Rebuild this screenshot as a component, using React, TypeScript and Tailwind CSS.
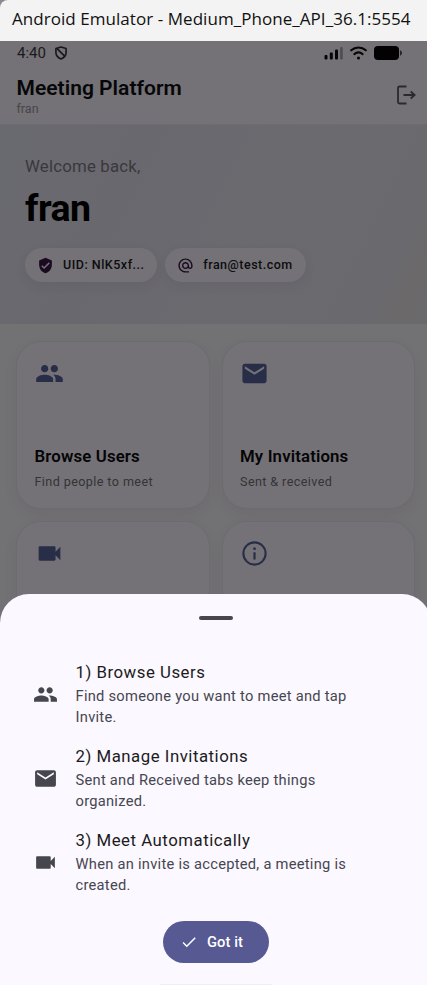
import type { ComponentType, ReactNode } from "react";
import {
  MdAlternateEmail,
  MdCheck,
  MdEmail,
  MdPeople,
  MdVerifiedUser,
  MdVideocam,
} from "react-icons/md";

type Icon = ComponentType<{ className?: string }>;

function InfoIcon({ className }: { className?: string }) {
  return (
    <svg className={className} viewBox="0 0 24 24" fill="none" stroke="currentColor" strokeWidth="1.700">
      <circle cx="12" cy="12" r="9.200" />
      <path d="M12 11v6" strokeWidth="1.800" />
      <path d="M12 7v2" strokeWidth="2" />
    </svg>
  );
}

function TitleBar() {
  return (
    <div className="h-[41px] shrink-0 bg-[#8a8a8a]">
      <div className="flex h-full items-center rounded-tl-[8px] bg-[#f3f3f3] pl-3 pb-[3px]">
        <span className="whitespace-nowrap font-['Open_Sans','Noto_Sans',sans-serif] text-[17px] leading-6 tracking-[0.05px] text-[#111]">
          Android Emulator - Medium_Phone_API_36.1:5554
        </span>
      </div>
    </div>
  );
}

function StatusBar() {
  return (
    <div className="flex h-[24px] items-center pl-[17px] pr-[29px]">
      <span className="text-[15px] leading-5 text-[#1b1a1d]">4:40</span>
      <svg className="ml-[9px] h-[14px] w-[12px]" viewBox="0 0 13 15" fill="none" stroke="#19181b" strokeWidth="1.8">
        <path d="M6.5 1 12 2.6V7c0 3.2-2.2 5.6-5.5 7C3.200 12.600 1 10.200 1 7V2.600Z" strokeLinejoin="round" />
        <path d="M2 2.500 11 11.500" />
      </svg>
      <div className="ml-auto flex items-center gap-[7px]">
        <svg className="h-[14px] w-[19px]" viewBox="0 0 19 14">
          <rect x="0.500" y="9" width="3" height="4.500" rx="1" fill="#050505" />
          <rect x="5.800" y="6.500" width="3" height="7" rx="1" fill="#050505" />
          <rect x="11" y="3.500" width="3" height="10" rx="1" fill="#050505" />
          <rect x="16.200" y="1" width="2.500" height="12.500" rx="1" fill="#4c4b4e" />
        </svg>
        <svg className="h-[14px] w-[17px]" viewBox="0 0 17 14" fill="none" stroke="#050505" strokeWidth="2.100" strokeLinecap="round">
          <path d="M1.200 4.300C5.300.6 11.700.6 15.800 4.300" />
          <path d="M4.400 8.100c2.500-2.100 5.700-2.100 8.200 0" />
          <circle cx="8.500" cy="12" r="1.500" fill="#050505" stroke="none" />
        </svg>
        <svg className="h-[14px] w-[28px]" viewBox="0 0 28 14" fill="#020202">
          <rect width="25" height="14" rx="4" />
          <path d="M26.300 4.300c1.800.6 1.800 4.800 0 5.400Z" />
        </svg>
      </div>
    </div>
  );
}

function AppBar() {
  return (
    <div className="flex h-[60px] items-center justify-between border-b border-[#6e6c71] pl-[16.500px] pr-[15.500px]">
      <div className="flex flex-col pt-[2px]">
        <span className="text-[21px] font-semibold leading-[25px] tracking-[0.030px] text-[#070709]">Meeting Platform</span>
        <span className="text-[12.500px] leading-[15px] text-[#474649]">fran</span>
      </div>
      <svg className="mt-[1px] h-[20px] w-[20px]" viewBox="0 0 20 20" fill="none" stroke="#2a292c" strokeWidth="1.800">
        <path d="M10.500 1.500H3.500C2.500 1.500 2 2 2 3v14c0 1 .5 1.500 1.500 1.500H10.500" />
        <path d="M7.500 10h11M14.700 6.500l3.900 3.500-3.900 3.500" />
      </svg>
    </div>
  );
}

function Chip({ icon: Icon, children }: { icon: Icon; children: ReactNode }) {
  return (
    <div className="flex h-[34px] items-center gap-[9px] rounded-full bg-[#747276] pl-3 pr-[12.800px] shadow-[0_4px_10px_rgba(70,65,80,0.12)]">
      <Icon className="size-[17px] text-[#1b0b20]" />
      <span className="whitespace-nowrap text-[12.500px] font-medium leading-4 tracking-[0.500px] text-[#0d0c0f]">
        {children}
      </span>
    </div>
  );
}

function Hero() {
  return (
    <div className="flex h-[199px] flex-col bg-[linear-gradient(115deg,#696a70_0%,#69686e_28%,#6b6a6f_60%,#6a696e_87%,#6b6969_94%,#6a696e_100%)] pl-[25px] pt-[30px]">
      <span className="text-[16.800px] leading-[22px] tracking-[0.200px] text-[#39383c]">Welcome back,</span>
      <span className="mt-[8px] text-[37.500px] font-bold leading-[46px] tracking-[-0.5px] text-black">fran</span>
      <div className="mt-[17px] flex gap-2">
        <Chip icon={MdVerifiedUser}>UID: NlK5xf...</Chip>
        <Chip icon={MdAlternateEmail}>fran@test.com</Chip>
      </div>
    </div>
  );
}

function ActionCard({ icon: Icon, title, text }: { icon: Icon; title?: string; text?: string }) {
  return (
    <div className="flex h-[168px] flex-col items-start rounded-[25px] border border-[#6c6b71] bg-[#747276] px-[17.500px] pb-[17.500px] pt-[17px] shadow-[0_6px_12px_rgba(80,78,86,0.12)]">
      <Icon className="size-[29px] text-[#282d48]" />
      {title && (
        <span className="mt-auto whitespace-nowrap text-[16.800px] font-semibold leading-[22px] tracking-[0.15px] text-[#050506]">
          {title}
        </span>
      )}
      {text && (
        <span className="mt-[6px] whitespace-nowrap text-[12.600px] leading-[17px] tracking-[0.4px] text-[#343337]">
          {text}
        </span>
      )}
    </div>
  );
}

function Step({ icon: Icon, title, text }: { icon: Icon; title: string; text: string }) {
  return (
    <div className="flex h-[84px] items-center gap-[17.500px] pl-[33px] pr-[60px]">
      <Icon className="size-[25px] shrink-0 text-[#46464f]" />
      <div className="flex flex-col">
        <span className="whitespace-nowrap text-[16.800px] leading-[25px] tracking-[0.520px] text-[#1b1b21]">{title}</span>
        <span className="mt-px w-[290px] text-[14.700px] leading-[21px] tracking-[0.260px] text-[#46464f]">{text}</span>
      </div>
    </div>
  );
}

function BottomSheet() {
  return (
    <div className="absolute inset-x-0 bottom-0 flex h-[391.500px] flex-col items-center rounded-t-[29px] bg-[#fbf8ff]">
      <div className="mt-[22.500px] h-[4px] w-[34px] rounded-full bg-[#47464c]" />
      <div className="mt-[32px] flex w-full flex-col">
        <Step icon={MdPeople} title="1) Browse Users" text="Find someone you want to meet and tap Invite." />
        <Step icon={MdEmail} title="2) Manage Invitations" text="Sent and Received tabs keep things organized." />
        <Step icon={MdVideocam} title="3) Meet Automatically" text="When an invite is accepted, a meeting is created." />
      </div>
      <button className="mt-[17px] flex h-[42px] w-[106px] items-center gap-[9.500px] rounded-full bg-[#565992] pl-[17px] text-white">
        <MdCheck className="size-[18px]" />
        <span className="whitespace-nowrap text-[14.700px] font-medium leading-5 tracking-[0.100px]">Got it</span>
      </button>
      <div className="mt-auto h-px w-[112px] bg-[#f0edf3]" />
    </div>
  );
}

export default function App() {
  return (
    <div className="flex h-[985px] w-full flex-col overflow-hidden font-[Roboto,sans-serif]">
      <TitleBar />
      <div className="relative h-[944px] w-[431px] overflow-hidden bg-[#727174]">
        <div className="bg-[#747276]">
          <StatusBar />
          <AppBar />
        </div>
        <Hero />
        <div className="grid grid-cols-2 gap-x-[12px] gap-y-[12.500px] px-[16px] pt-[16.500px]">
          <ActionCard icon={MdPeople} title="Browse Users" text="Find people to meet" />
          <ActionCard icon={MdEmail} title="My Invitations" text="Sent & received" />
          <ActionCard icon={MdVideocam} />
          <ActionCard icon={InfoIcon} />
        </div>
        <BottomSheet />
      </div>
    </div>
  );
}
